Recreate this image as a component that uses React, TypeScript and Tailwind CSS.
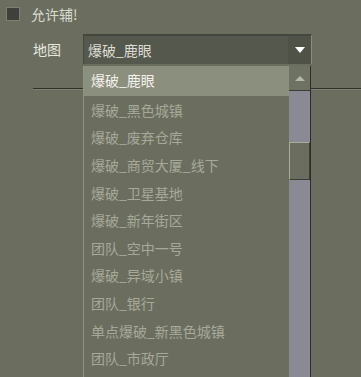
import React from 'react';

const maps = [
  '爆破_鹿眼',
  '爆破_黑色城镇',
  '爆破_废弃仓库',
  '爆破_商贸大厦_线下',
  '爆破_卫星基地',
  '爆破_新年街区',
  '团队_空中一号',
  '爆破_异域小镇',
  '团队_银行',
  '单点爆破_新黑色城镇',
  '团队_市政厅',
];

export default function App() {
  const selected = 0;

  return (
    <div className="relative w-[361px] h-[377px] overflow-hidden bg-[#6b6e5f] text-[14px] leading-none font-['Noto_Sans_CJK_SC','Noto_Sans',sans-serif]">
      {/* checkbox row */}
      <div className="flex items-center h-[14px] mt-[7px] ml-[6px]">
        <div className="w-[14px] h-[14px] bg-[#3e4039] border border-[#7e8172]"></div>
        <span className="ml-[11px] text-[#d8dad0]">允许辅!</span>
      </div>

      {/* map row */}
      <div className="flex items-center mt-[13px] ml-[33px]">
        <span className="w-[50px] text-[#e6e7e0]">地图</span>
        <div className="flex items-stretch w-[229px] h-[30px] bg-[#55584c] border-t-2 border-l border-[#45473f] border-r border-r-[#8a8d7e]">
          <span className="flex-1 flex items-center pl-[4px] text-[#dcddd5]">爆破_鹿眼</span>
          <div className="w-[23px] flex items-center justify-center bg-[#4f5247]">
            <svg width="10" height="6" viewBox="0 0 10 6">
              <path d="M0 0h10L5 6z" fill="#ffffff" />
            </svg>
          </div>
        </div>
      </div>

      {/* etched group line */}
      <div className="mt-[24px] ml-[33px]">
        <div className="h-px bg-[#2f312b]"></div>
        <div className="h-px bg-[#7f8273]"></div>
      </div>

      {/* dropdown list */}
      <div className="absolute left-[83px] top-[66px] w-[228px] bottom-0 flex border-l border-[#8f9383] border-r border-r-[#2c2e28] bg-[#6b6e5f]">
        <div className="flex-1 flex flex-col">
          {maps.map((m, i) => (
            <div
              key={m}
              className={`h-[27.6px] shrink-0 flex items-center pl-[7px] whitespace-nowrap ${
                i === selected ? 'bg-[#8b8f7e] text-[#f2f2ec] h-[30px] pb-[2px]' : 'text-[#a6a999]'
              }`}
            >
              {m}
            </div>
          ))}
        </div>
        {/* scrollbar */}
        <div className="w-[21px] flex flex-col bg-[#8a8a94]">
          <div className="h-[25px] flex items-center justify-center bg-[#6e7262] border-b border-[#3a3c35]">
            <svg width="10" height="5" viewBox="0 0 10 5">
              <path d="M5 0l5 5H0z" fill="#b4b7a9" />
            </svg>
          </div>
          <div className="h-[51px]"></div>
          <div className="h-[38px] bg-[#6b6e5f] border-t border-l border-[#a7ab9a] border-b border-r border-b-[#3a3c35] border-r-[#3a3c35]"></div>
        </div>
      </div>
    </div>
  );
}
